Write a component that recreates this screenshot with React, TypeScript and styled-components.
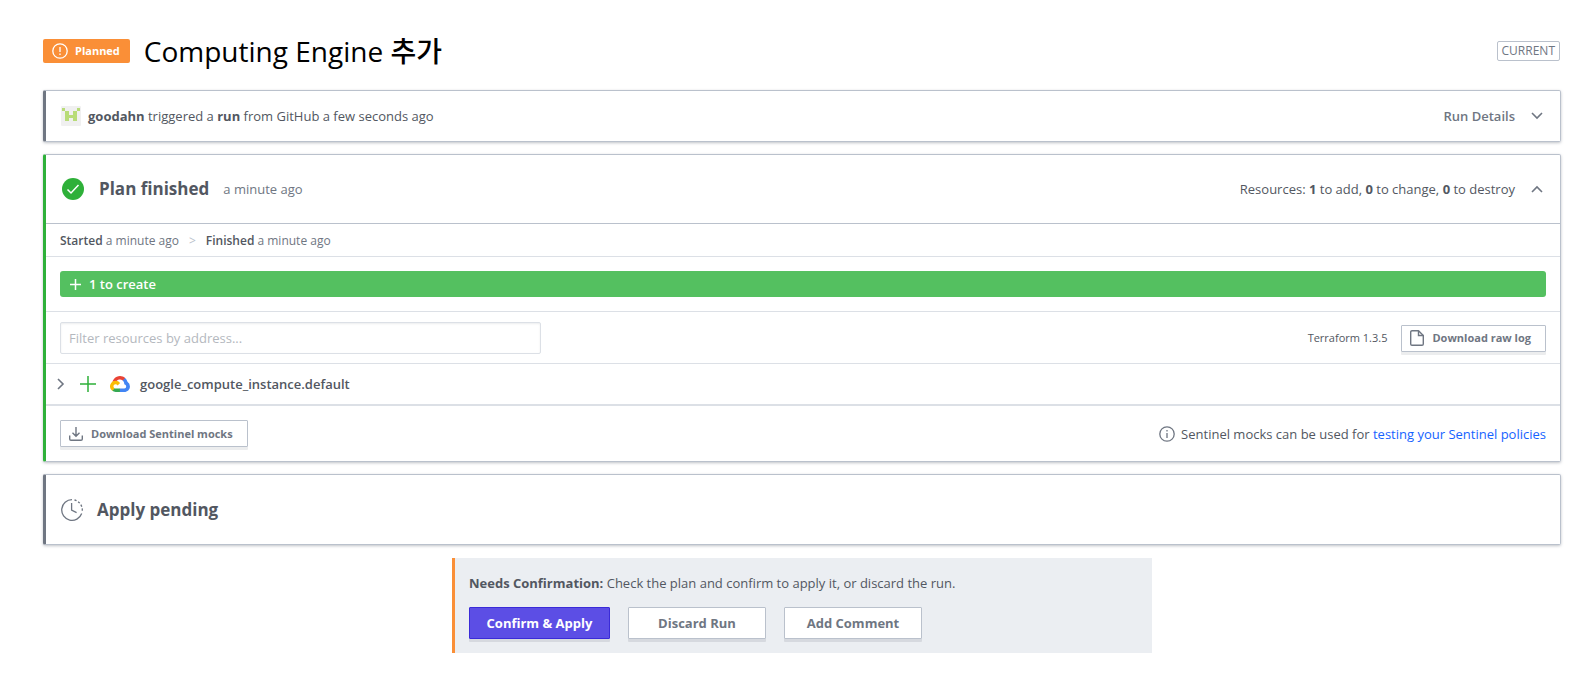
import React from "react";
import styled, { createGlobalStyle } from "styled-components";

const GlobalStyle = createGlobalStyle`
  * { box-sizing: border-box; }
  body {
    margin: 0;
    background: #fff;
    color: #525761;
    font-family: "Open Sans", "Noto Sans CJK KR", sans-serif;
    font-size: 13px;
    line-height: 18px;
  }
  button, input { font: inherit; color: inherit; margin: 0; }
  h1, h2, p { margin: 0; }
  strong { font-weight: 700; }
  svg { display: block; flex: none; }
`;

const Page = styled.main`
  padding: 28px 29px 40px 43px;
`;

const Header = styled.header`
  display: flex;
  align-items: center;
  height: 46px;
  margin-bottom: 16px;
`;

const StatusBadge = styled.span`
  display: flex;
  align-items: center;
  gap: 7px;
  height: 24px;
  padding: 0 10px 0 9px;
  border-radius: 2px;
  background: #fa8f37;
  color: #fff;
  font-size: 11px;
  font-weight: 700;
`;

const Title = styled.h1`
  flex: 1;
  margin-left: 14px;
  color: #000;
  font-size: 28px;
  line-height: 36px;
  font-weight: 500;
`;

const CurrentTag = styled.span`
  margin-right: 1px;
  padding: 0 4px;
  border: 1px solid #bac1cc;
  border-radius: 2px;
  color: #6f7682;
  font-size: 12px;
`;

const Card = styled.section<{ $accent: string }>`
  margin-bottom: 12px;
  border: 1px solid #bac1cc;
  border-left: 3px solid ${(p) => p.$accent};
  border-radius: 2px;
  box-shadow: 0 1px 3px rgba(97, 104, 117, 0.4);
`;

const CardHeader = styled.div<{ $height: number; $divided?: boolean }>`
  display: flex;
  align-items: center;
  min-height: ${(p) => p.$height}px;
  padding: 0 14px 0 15px;
  border-bottom: ${(p) => (p.$divided ? "1px solid #bac1cc" : "0")};
`;

const TriggerText = styled.p`
  flex: 1;
  margin-left: 7px;
`;

const Toggle = styled.button`
  display: flex;
  align-items: center;
  gap: 13px;
  padding: 0;
  border: 0;
  background: none;
  cursor: pointer;
`;

const ToggleLabel = styled.span<{ $strong?: boolean }>`
  color: ${(p) => (p.$strong ? "#6f7682" : "inherit")};
  font-weight: ${(p) => (p.$strong ? 600 : 400)};
`;

const CardTitle = styled.h2`
  margin-left: 14px;
  font-size: 17px;
  line-height: 24px;
  font-weight: 700;
`;

const Ago = styled.span`
  flex: 1;
  margin-left: 14px;
  color: #6f7682;
  font-weight: 500;
`;

const Section = styled.div<{ $padding: string; $line?: string }>`
  display: flex;
  align-items: center;
  padding: ${(p) => p.$padding};
  border-bottom: ${(p) => p.$line ?? "1px solid #dce0e6"};
`;

const TimeEntry = styled.span`
  color: #6f7682;
  font-size: 12px;
  font-weight: 500;

  strong { color: #525761; font-weight: 600; }
`;

const Separator = styled.span`
  margin: 0 10px;
  color: #bac1cc;
  font-size: 12px;
`;

const CreateBar = styled.div`
  display: flex;
  flex: 1;
  align-items: center;
  gap: 8px;
  height: 26px;
  padding: 0 10px;
  border-radius: 3px;
  background: #54c060;
  color: #fff;
  font-weight: 600;
`;

const FilterInput = styled.input`
  width: 481px;
  max-width: 50%;
  height: 32px;
  margin-right: auto;
  padding: 0 8px;
  border: 1px solid #dce0e6;
  border-radius: 2px;
  background: #fff;
  box-shadow: inset 0 1px 2px rgba(97, 104, 117, 0.12);

  &::placeholder { color: #b4b8be; opacity: 1; }
`;

const Version = styled.span`
  margin-right: 14px;
  font-size: 11px;
`;

const SmallButton = styled.button`
  display: flex;
  align-items: center;
  gap: 8px;
  height: 27px;
  padding: 0 14px 0 8px;
  border: 1px solid #bac1cc;
  border-radius: 1px;
  background: #fff;
  box-shadow: 0 3px 0 rgba(97, 104, 117, 0.12);
  color: #6f7682;
  font-size: 11px;
  font-weight: 700;
  cursor: pointer;
`;

const ResourceRow = styled.button`
  display: flex;
  align-items: center;
  width: 100%;
  height: 42px;
  padding: 0 10px;
  border: 0;
  border-bottom: 2px solid #dce0e6;
  background: #fff;
  cursor: pointer;
`;

const RowIcon = styled.span<{ $gap: number }>`
  margin-right: ${(p) => p.$gap}px;
`;

const ResourceName = styled.span`
  font-weight: 600;
`;

const MockNote = styled.p`
  display: flex;
  align-items: center;
  gap: 6px;
  margin-left: auto;
`;

const Link = styled.a`
  color: #1563ff;
  text-decoration: none;
`;

const ConfirmPanel = styled.section`
  max-width: 700px;
  margin: 13px auto 0;
  padding: 16px 14px 14px;
  border-left: 3px solid #fa8f37;
  background: #ebeef2;
`;

const Actions = styled.div`
  display: flex;
  gap: 18px;
  margin-top: 15px;
`;

const ActionButton = styled.button<{ $primary?: boolean }>`
  min-width: ${(p) => (p.$primary ? 141 : 138)}px;
  height: 32px;
  padding: 0 12px;
  border: 1px solid ${(p) => (p.$primary ? "#3a2bd8" : "#bac1cc")};
  border-radius: 1px;
  background: ${(p) => (p.$primary ? "#5c4ee5" : "#fff")};
  box-shadow: 0 3px 0 rgba(97, 104, 117, 0.15);
  color: ${(p) => (p.$primary ? "#fff" : "#6f7682")};
  font-weight: 700;
  cursor: pointer;
`;

const AlertIcon = () => (
  <svg width="16" height="16" viewBox="0 0 16 16" fill="none" stroke="#fff" strokeWidth="1.3" aria-hidden="true">
    <circle cx="8" cy="8" r="7.2" />
    <path d="M8 4v5M8 10.6v1.5" />
  </svg>
);

const Avatar = () => (
  <svg width="20" height="20" viewBox="0 0 20 20" aria-hidden="true">
    <rect width="20" height="20" rx="1" fill="#f0f0f0" />
    <path
      fill="#b8dc78"
      d="M1 2h3v3h-3zM16 2h3v3h-3zM4 5h4v4h4v-4h4v10h-4v-3h-4v3h-4z"
    />
  </svg>
);

const Chevron = ({ d }: { d: string }) => (
  <svg width="18" height="18" viewBox="0 0 18 18" fill="none" stroke="#6f7682" strokeWidth="1.6" aria-hidden="true">
    <path d={d} />
  </svg>
);

const CheckIcon = () => (
  <svg width="24" height="24" viewBox="0 0 24 24" fill="none" aria-hidden="true">
    <circle cx="12" cy="12" r="11" fill="#2eb039" />
    <path d="M6.500 12.500l3.500 3.500 7.500-8" stroke="#fff" strokeWidth="1.5" />
  </svg>
);

const PendingIcon = () => (
  <svg width="22" height="22" viewBox="0 0 22 22" fill="none" stroke="#6f7682" strokeWidth="1.3" aria-hidden="true">
    <path d="M11 .7A10.300 10.300 0 1 0 20.700 14.500" />
    <path d="M13.500 1A10.300 10.300 0 0 1 21.100 13" strokeDasharray="2.200 1.800" />
    <path d="M10.600 4v7.200l5 2.500" />
  </svg>
);

const PlusIcon = ({ size, color }: { size: number; color: string }) => (
  <svg width={size} height={size} viewBox={`0 0 ${size} ${size}`} stroke={color} strokeWidth="1.5" aria-hidden="true">
    <path d={`M${size / 2} 0v${size}M0 ${size / 2}h${size}`} />
  </svg>
);

const FileIcon = () => (
  <svg width="14" height="16" viewBox="0 0 14 16" fill="none" stroke="#6f7682" strokeWidth="1.400" aria-hidden="true">
    <path d="M8.500 .7H2A1.300 1.300 0 0 0 .7 2v12A1.300 1.300 0 0 0 2 15.300h10a1.300 1.300 0 0 0 1.300-1.300V5.500z" strokeLinejoin="round" />
    <path d="M8.500 .7v4.800h4.800" />
  </svg>
);

const DownloadIcon = () => (
  <svg width="14" height="14" viewBox="0 0 14 14" fill="none" stroke="#6f7682" strokeWidth="1.400" aria-hidden="true">
    <path d="M7 0v9M3.500 5.800L7 9.300l3.500-3.500M.7 8.500V12a1.300 1.300 0 0 0 1.300 1.300h10a1.300 1.300 0 0 0 1.300-1.300V8.500" />
  </svg>
);

const InfoIcon = () => (
  <svg width="16" height="16" viewBox="0 0 16 16" fill="none" stroke="#6f7682" strokeWidth="1.300" aria-hidden="true">
    <circle cx="8" cy="8" r="7.200" />
    <path d="M8 7v5M8 4v1.500" />
  </svg>
);

const GoogleCloudIcon = () => (
  <svg width="20" height="16" viewBox="0 0 256 206" aria-hidden="true">
    <path fill="#ea4335" d="M170.250 56.820l22.250-22.250 1.480-9.370C153.440-11.680 88.980-7.500 52.420 33.920 42.270 45.420 34.730 59.760 30.720 74.570l7.970-1.120 44.500-7.340 3.440-3.510c19.800-21.750 53.270-24.670 76.130-6.170z" />
    <path fill="#4285f4" d="M224.200 73.920a100.250 100.250 0 0 0-30.210-48.720l-31.230 31.230a55.500 55.500 0 0 1 20.370 44.030v5.550a27.800 27.800 0 0 1 0 55.280h-55.670l-5.470 5.930v33.340l5.470 5.240h55.670c39.930.310 72.550-31.500 72.870-71.430a72.300 72.300 0 0 0-31.800-60.450" />
    <path fill="#34a853" d="M71.870 205.800h55.590v-44.510H71.870a27.600 27.600 0 0 1-11.480-2.500l-7.810 2.420-22.400 22.250-1.960 7.580a72.300 72.300 0 0 0 43.650 14.760" />
    <path fill="#fbbc05" d="M71.870 61.430a72.300 72.300 0 0 0-43.650 129.610l32.250-32.250a27.800 27.800 0 1 1 36.780-36.770l32.240-32.250a72.230 72.230 0 0 0-57.620-28.340" />
  </svg>
);

export default function App() {
  return (
    <>
      <GlobalStyle />
      <Page>
        <Header>
          <StatusBadge>
            <AlertIcon />
            Planned
          </StatusBadge>
          <Title>Computing Engine 추가</Title>
          <CurrentTag>CURRENT</CurrentTag>
        </Header>

        <Card $accent="#6f7682">
          <CardHeader $height={50}>
            <Avatar />
            <TriggerText>
              <strong>goodahn</strong> triggered a <strong>run</strong> from GitHub a few seconds ago
            </TriggerText>
            <Toggle type="button" aria-expanded={false}>
              <ToggleLabel $strong>Run Details</ToggleLabel>
              <Chevron d="M4 6l5 5 5-5" />
            </Toggle>
          </CardHeader>
        </Card>

        <Card $accent="#2eb039">
          <CardHeader $height={69} $divided>
            <CheckIcon />
            <CardTitle>Plan finished</CardTitle>
            <Ago>a minute ago</Ago>
            <Toggle type="button" aria-expanded>
              <ToggleLabel>
                Resources: <strong>1</strong> to add, <strong>0</strong> to change, <strong>0</strong> to destroy
              </ToggleLabel>
              <Chevron d="M4 12l5-5 5 5" />
            </Toggle>
          </CardHeader>

          <Section $padding="8px 14px 6px">
            <TimeEntry>
              <strong>Started</strong> a minute ago
            </TimeEntry>
            <Separator>&gt;</Separator>
            <TimeEntry>
              <strong>Finished</strong> a minute ago
            </TimeEntry>
          </Section>

          <Section $padding="14px">
            <CreateBar>
              <PlusIcon size={11} color="#fff" />
              1 to create
            </CreateBar>
          </Section>

          <Section $padding="10px 14px 9px">
            <FilterInput type="text" aria-label="Filter resources by address" placeholder="Filter resources by address..." />
            <Version>Terraform 1.3.5</Version>
            <SmallButton type="button">
              <FileIcon />
              Download raw log
            </SmallButton>
          </Section>

          <ResourceRow type="button" aria-expanded={false}>
            <RowIcon $gap={6}>
              <Chevron d="M2 4l5 5-5 5" />
            </RowIcon>
            <RowIcon $gap={14}>
              <PlusIcon size={16} color="#2eb039" />
            </RowIcon>
            <RowIcon $gap={10}>
              <GoogleCloudIcon />
            </RowIcon>
            <ResourceName>google_compute_instance.default</ResourceName>
          </ResourceRow>

          <Section $padding="14px" $line="0">
            <SmallButton type="button">
              <DownloadIcon />
              Download Sentinel mocks
            </SmallButton>
            <MockNote>
              <InfoIcon />
              <span>
                Sentinel mocks can be used for <Link href="#sentinel">testing your Sentinel policies</Link>
              </span>
            </MockNote>
          </Section>
        </Card>

        <Card $accent="#6f7682">
          <CardHeader $height={69}>
            <PendingIcon />
            <CardTitle>Apply pending</CardTitle>
          </CardHeader>
        </Card>

        <ConfirmPanel>
          <p>
            <strong>Needs Confirmation:</strong> Check the plan and confirm to apply it, or discard the run.
          </p>
          <Actions>
            <ActionButton type="button" $primary>
              Confirm &amp; Apply
            </ActionButton>
            <ActionButton type="button">Discard Run</ActionButton>
            <ActionButton type="button">Add Comment</ActionButton>
          </Actions>
        </ConfirmPanel>
      </Page>
    </>
  );
}
